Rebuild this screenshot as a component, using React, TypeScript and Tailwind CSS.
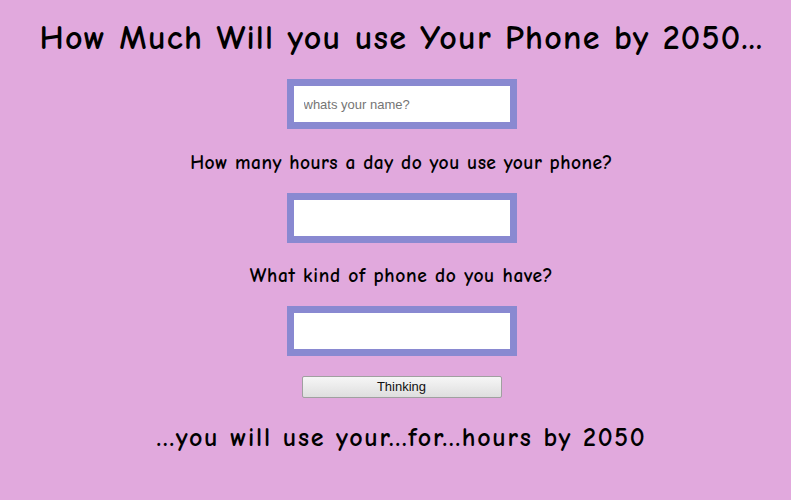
import React from 'react';

const comic = "font-['Comic_Sans_MS','Comic_Neue','DejaVu_Sans',sans-serif] font-bold text-black";

const Field: React.FC<{ placeholder?: string; className?: string }> = ({ placeholder, className }) => (
    <input
        type="text"
        placeholder={placeholder}
        className={`w-[230px] h-[50px] bg-white border-[7px] border-[#8989d1] px-[10px] text-[13px] font-['Liberation_Sans',Arial,sans-serif] text-black placeholder:text-[#757575] outline-none ${className || ''}`}
    />
);

export default function App() {
    return (
        <div className="min-h-[500px] w-full bg-[#e1a9dd] flex flex-col items-center pl-[12px]">
            <h1 className={`${comic} mt-[18px] h-[40px] leading-[40px] text-[34px] tracking-[1.2px] whitespace-nowrap`}>
                How Much Will you use Your Phone by 2050...
            </h1>
            <Field placeholder="whats your name?" className="mt-[21px]" />
            <h3 className={`${comic} mt-[22px] h-[24px] leading-[24px] text-[19.5px] tracking-[0.45px] whitespace-nowrap`}>
                How many hours a day do you use your phone?
            </h3>
            <Field className="mt-[18px]" />
            <h3 className={`${comic} mt-[21px] h-[24px] leading-[24px] text-[19.5px] tracking-[0.65px] whitespace-nowrap`}>
                What kind of phone do you have?
            </h3>
            <Field className="mt-[18px]" />
            <button className="mt-[20px] w-[200px] h-[22px] border border-[#a0a0a0] rounded-[2px] bg-gradient-to-b from-[#f6f6f6] to-[#dedede] text-[13px] leading-[20px] font-['Liberation_Sans',Arial,sans-serif] text-[#111111]">
                Thinking
            </button>
            <h2 className={`${comic} mt-[25px] h-[30px] leading-[30px] text-[26px] tracking-[1.7px] whitespace-nowrap`}>
                ...you will use your...for...hours by 2050
            </h2>
        </div>
    );
}
